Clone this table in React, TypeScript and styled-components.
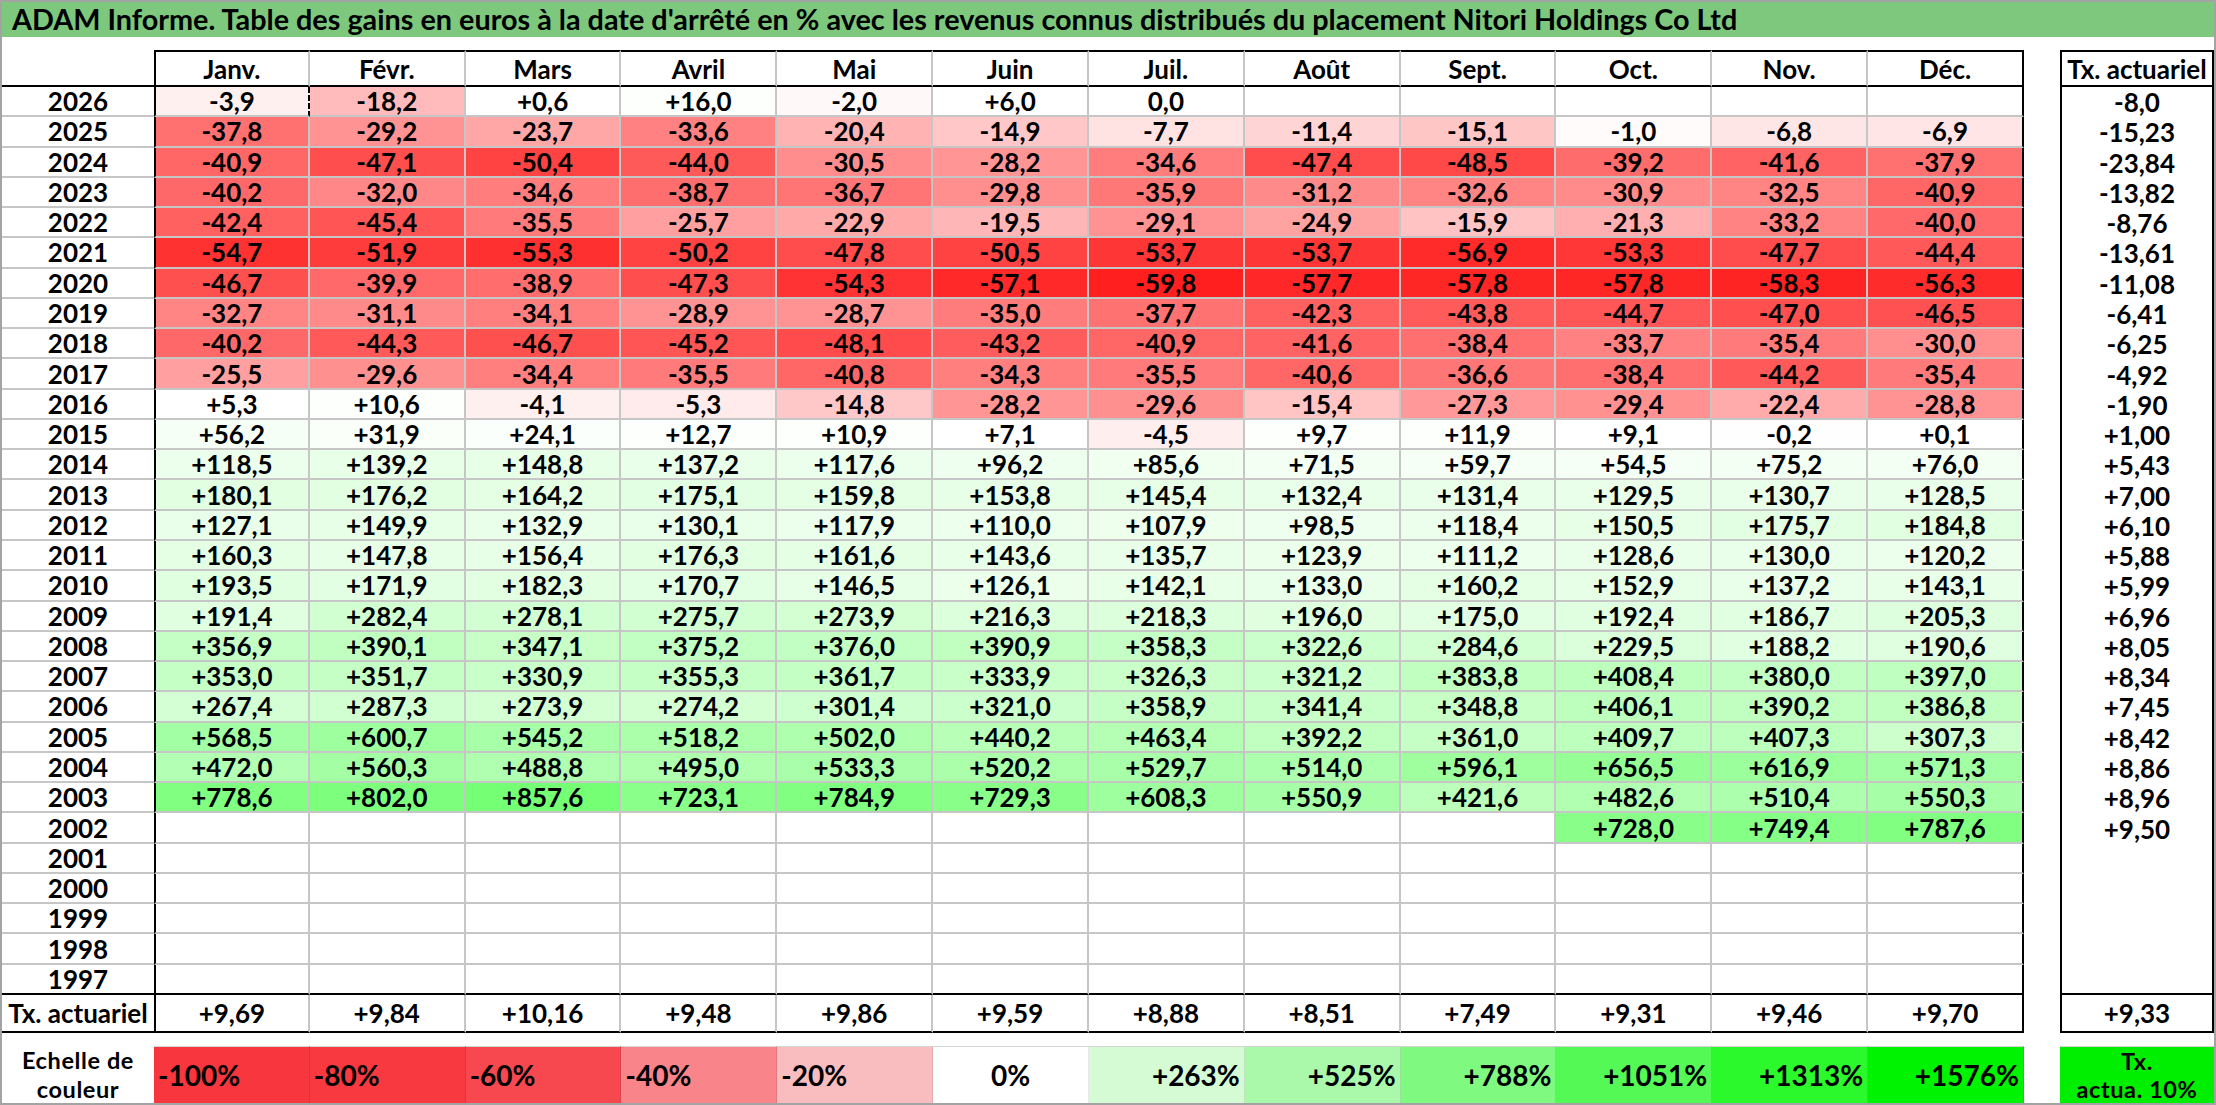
import React from "react";
import styled, { createGlobalStyle } from "styled-components";

const GlobalStyle = createGlobalStyle`
  html, body { margin: 0; padding: 0; background: #ffffff; }
  body { font-family: Lato, "Open Sans", "Liberation Sans", sans-serif; color: #000; }
  *, *::before, *::after { box-sizing: border-box; }
`;

const COLS = "152px repeat(12, 155.833px) 36px 1fr";
const GRID = "#c6c6c6";
const INK = "#000000";

type Edge = "none" | "grid" | "ink" | "dash";
const edge = (e: Edge) =>
  e === "none"
    ? "0 none"
    : e === "grid"
    ? `2px solid ${GRID}`
    : e === "dash"
    ? `2px dashed ${INK}`
    : `2px solid ${INK}`;

const Page = styled.div`
  width: 2216px;
  height: 1105px;
  border: 2px solid #a3a3a3;
  background: #ffffff;
  display: flex;
  flex-direction: column;
  overflow: hidden;
`;

const TitleBar = styled.div`
  flex: none;
  height: 35px;
  background: #7dc87d;
  display: flex;
  align-items: flex-end;
  padding: 0 0 2px 10px;
  font-size: 28.8px;
  line-height: 31px;
  font-weight: 700;
  white-space: nowrap;
`;

const Table = styled.div`
  margin-top: 13px;
  display: flex;
  flex-direction: column;
`;

const Row = styled.div<{ $h: number }>`
  flex: none;
  display: grid;
  grid-template-columns: ${COLS};
  height: ${(p) => p.$h}px;
`;

const LegendRow = styled(Row)`
  margin-top: 13px;
`;

const BaseCell = styled.div`
  display: flex;
  align-items: center;
  justify-content: center;
  font-size: 26px;
  line-height: 26px;
  font-weight: 700;
  white-space: nowrap;
  min-width: 0;
`;

const LabelCell = styled(BaseCell)<{ $bottom: Edge }>`
  border-bottom: ${(p) => edge(p.$bottom)};
`;

const MonthCell = styled(BaseCell)<{
  $bg: string;
  $top: Edge;
  $bottom: Edge;
  $left: Edge;
  $right: Edge;
}>`
  background: ${(p) => p.$bg};
  border-top: ${(p) => edge(p.$top)};
  border-bottom: ${(p) => edge(p.$bottom)};
  border-left: ${(p) => edge(p.$left)};
  border-right: ${(p) => edge(p.$right)};
`;

const Spacer = styled.div``;

const TxCell = styled(BaseCell)<{ $top: Edge; $bottom: Edge }>`
  border-left: ${edge("ink")};
  border-right: ${edge("ink")};
  border-top: ${(p) => edge(p.$top)};
  border-bottom: ${(p) => edge(p.$bottom)};
`;

const StackedText = styled.span`
  display: block;
  font-size: 23.5px;
  line-height: 28.5px;
  letter-spacing: 0.6px;
  text-align: center;
`;

const LegendLabel = styled(BaseCell)`
  flex-direction: column;
`;

const Swatch = styled(BaseCell)<{ $bg: string; $align: "left" | "center" | "right" }>`
  background: ${(p) => p.$bg};
  justify-content: ${(p) =>
    p.$align === "left" ? "flex-start" : p.$align === "right" ? "flex-end" : "center"};
  padding: 0 4px;
  font-size: 28px;
  line-height: 34px;
  border-top: 1px solid #d4d4d4;
  border-right: 1px solid rgba(0, 0, 0, 0.09);
`;

const LegendTx = styled(BaseCell)`
  background: #00ee00;
  flex-direction: column;
  border-top: 1px solid #d4d4d4;
`;

const MONTHS = [
  "Janv.", "Févr.", "Mars", "Avril", "Mai", "Juin",
  "Juil.", "Août", "Sept.", "Oct.", "Nov.", "Déc.",
];

const E = "";
const DATA: [string, string[], string][] = [
  ["2026", ["-3,9", "-18,2", "+0,6", "+16,0", "-2,0", "+6,0", "0,0", E, E, E, E, E], "-8,0"],
  ["2025", ["-37,8", "-29,2", "-23,7", "-33,6", "-20,4", "-14,9", "-7,7", "-11,4", "-15,1", "-1,0", "-6,8", "-6,9"], "-15,23"],
  ["2024", ["-40,9", "-47,1", "-50,4", "-44,0", "-30,5", "-28,2", "-34,6", "-47,4", "-48,5", "-39,2", "-41,6", "-37,9"], "-23,84"],
  ["2023", ["-40,2", "-32,0", "-34,6", "-38,7", "-36,7", "-29,8", "-35,9", "-31,2", "-32,6", "-30,9", "-32,5", "-40,9"], "-13,82"],
  ["2022", ["-42,4", "-45,4", "-35,5", "-25,7", "-22,9", "-19,5", "-29,1", "-24,9", "-15,9", "-21,3", "-33,2", "-40,0"], "-8,76"],
  ["2021", ["-54,7", "-51,9", "-55,3", "-50,2", "-47,8", "-50,5", "-53,7", "-53,7", "-56,9", "-53,3", "-47,7", "-44,4"], "-13,61"],
  ["2020", ["-46,7", "-39,9", "-38,9", "-47,3", "-54,3", "-57,1", "-59,8", "-57,7", "-57,8", "-57,8", "-58,3", "-56,3"], "-11,08"],
  ["2019", ["-32,7", "-31,1", "-34,1", "-28,9", "-28,7", "-35,0", "-37,7", "-42,3", "-43,8", "-44,7", "-47,0", "-46,5"], "-6,41"],
  ["2018", ["-40,2", "-44,3", "-46,7", "-45,2", "-48,1", "-43,2", "-40,9", "-41,6", "-38,4", "-33,7", "-35,4", "-30,0"], "-6,25"],
  ["2017", ["-25,5", "-29,6", "-34,4", "-35,5", "-40,8", "-34,3", "-35,5", "-40,6", "-36,6", "-38,4", "-44,2", "-35,4"], "-4,92"],
  ["2016", ["+5,3", "+10,6", "-4,1", "-5,3", "-14,8", "-28,2", "-29,6", "-15,4", "-27,3", "-29,4", "-22,4", "-28,8"], "-1,90"],
  ["2015", ["+56,2", "+31,9", "+24,1", "+12,7", "+10,9", "+7,1", "-4,5", "+9,7", "+11,9", "+9,1", "-0,2", "+0,1"], "+1,00"],
  ["2014", ["+118,5", "+139,2", "+148,8", "+137,2", "+117,6", "+96,2", "+85,6", "+71,5", "+59,7", "+54,5", "+75,2", "+76,0"], "+5,43"],
  ["2013", ["+180,1", "+176,2", "+164,2", "+175,1", "+159,8", "+153,8", "+145,4", "+132,4", "+131,4", "+129,5", "+130,7", "+128,5"], "+7,00"],
  ["2012", ["+127,1", "+149,9", "+132,9", "+130,1", "+117,9", "+110,0", "+107,9", "+98,5", "+118,4", "+150,5", "+175,7", "+184,8"], "+6,10"],
  ["2011", ["+160,3", "+147,8", "+156,4", "+176,3", "+161,6", "+143,6", "+135,7", "+123,9", "+111,2", "+128,6", "+130,0", "+120,2"], "+5,88"],
  ["2010", ["+193,5", "+171,9", "+182,3", "+170,7", "+146,5", "+126,1", "+142,1", "+133,0", "+160,2", "+152,9", "+137,2", "+143,1"], "+5,99"],
  ["2009", ["+191,4", "+282,4", "+278,1", "+275,7", "+273,9", "+216,3", "+218,3", "+196,0", "+175,0", "+192,4", "+186,7", "+205,3"], "+6,96"],
  ["2008", ["+356,9", "+390,1", "+347,1", "+375,2", "+376,0", "+390,9", "+358,3", "+322,6", "+284,6", "+229,5", "+188,2", "+190,6"], "+8,05"],
  ["2007", ["+353,0", "+351,7", "+330,9", "+355,3", "+361,7", "+333,9", "+326,3", "+321,2", "+383,8", "+408,4", "+380,0", "+397,0"], "+8,34"],
  ["2006", ["+267,4", "+287,3", "+273,9", "+274,2", "+301,4", "+321,0", "+358,9", "+341,4", "+348,8", "+406,1", "+390,2", "+386,8"], "+7,45"],
  ["2005", ["+568,5", "+600,7", "+545,2", "+518,2", "+502,0", "+440,2", "+463,4", "+392,2", "+361,0", "+409,7", "+407,3", "+307,3"], "+8,42"],
  ["2004", ["+472,0", "+560,3", "+488,8", "+495,0", "+533,3", "+520,2", "+529,7", "+514,0", "+596,1", "+656,5", "+616,9", "+571,3"], "+8,86"],
  ["2003", ["+778,6", "+802,0", "+857,6", "+723,1", "+784,9", "+729,3", "+608,3", "+550,9", "+421,6", "+482,6", "+510,4", "+550,3"], "+8,96"],
  ["2002", [E, E, E, E, E, E, E, E, E, "+728,0", "+749,4", "+787,6"], "+9,50"],
  ["2001", [E, E, E, E, E, E, E, E, E, E, E, E], E],
  ["2000", [E, E, E, E, E, E, E, E, E, E, E, E], E],
  ["1999", [E, E, E, E, E, E, E, E, E, E, E, E], E],
  ["1998", [E, E, E, E, E, E, E, E, E, E, E, E], E],
  ["1997", [E, E, E, E, E, E, E, E, E, E, E, E], E],
];

const TOTALS = ["+9,69", "+9,84", "+10,16", "+9,48", "+9,86", "+9,59", "+8,88", "+8,51", "+7,49", "+9,31", "+9,46", "+9,70"];
const TOTAL_TX = "+9,33";

const LEGEND: { label: string; bg: string; align: "left" | "center" | "right" }[] = [
  { label: "-100%", bg: "#f7363e", align: "left" },
  { label: "-80%", bg: "#f8393f", align: "left" },
  { label: "-60%", bg: "#f7474f", align: "left" },
  { label: "-40%", bg: "#f98489", align: "left" },
  { label: "-20%", bg: "#fabdbf", align: "left" },
  { label: "0%", bg: "#ffffff", align: "center" },
  { label: "+263%", bg: "#d5fbd5", align: "right" },
  { label: "+525%", bg: "#aaf9aa", align: "right" },
  { label: "+788%", bg: "#80f980", align: "right" },
  { label: "+1051%", bg: "#55f955", align: "right" },
  { label: "+1313%", bg: "#2bf92b", align: "right" },
  { label: "+1576%", bg: "#00f300", align: "right" },
];

function cellColor(s: string): string {
  if (!s) return "#ffffff";
  const v = parseFloat(s.replace(",", "."));
  if (!v) return "#ffffff";
  if (v < 0) {
    const t = Math.min(1, -v / 60);
    const g = Math.round(255 - t * 225);
    return `rgb(255, ${g}, ${g})`;
  }
  const t = Math.min(1, v / 1576);
  const c = Math.round(255 - t * 255);
  return `rgb(${c}, 255, ${c})`;
}

const HEADER_H = 37;
const ROW_H = 908 / 30;
const TOTAL_H = 38;
const LEGEND_H = 57;

export default function App() {
  const lastIdx = DATA.length - 1;
  return (
    <>
      <GlobalStyle />
      <Page>
        <TitleBar>
          ADAM Informe. Table des gains en euros à la date d'arrêté en % avec les revenus connus distribués du placement Nitori Holdings Co Ltd
        </TitleBar>
        <Table>
          <Row $h={HEADER_H}>
            <LabelCell $bottom="ink" />
            {MONTHS.map((m, i) => (
              <MonthCell
                key={m}
                $bg="#ffffff"
                $top="ink"
                $bottom="ink"
                $left={i === 0 ? "ink" : "none"}
                $right={i === 11 ? "ink" : "grid"}
              >
                {m}
              </MonthCell>
            ))}
            <Spacer />
            <TxCell $top="ink" $bottom="ink">Tx. actuariel</TxCell>
          </Row>
          {DATA.map(([year, vals, tx], r) => {
            const bottom: Edge = r === lastIdx ? "ink" : "grid";
            return (
              <Row key={year} $h={ROW_H}>
                <LabelCell $bottom={bottom}>{year}</LabelCell>
                {vals.map((v, i) => (
                  <MonthCell
                    key={i}
                    $bg={cellColor(v)}
                    $top="none"
                    $bottom={bottom}
                    $left={i === 0 ? "ink" : "none"}
                    $right={i === 11 ? "ink" : r === 0 && i === 0 ? "dash" : "grid"}
                  >
                    {v}
                  </MonthCell>
                ))}
                <Spacer />
                <TxCell $top="none" $bottom={r === lastIdx ? "ink" : "none"}>
                  {tx}
                </TxCell>
              </Row>
            );
          })}
          <Row $h={TOTAL_H}>
            <LabelCell $bottom="ink">Tx. actuariel</LabelCell>
            {TOTALS.map((v, i) => (
              <MonthCell
                key={i}
                $bg="#ffffff"
                $top="none"
                $bottom="ink"
                $left={i === 0 ? "ink" : "none"}
                $right={i === 11 ? "ink" : "grid"}
              >
                {v}
              </MonthCell>
            ))}
            <Spacer />
            <TxCell $top="none" $bottom="ink">{TOTAL_TX}</TxCell>
          </Row>
          <LegendRow $h={LEGEND_H}>
            <LegendLabel>
              <StackedText>Echelle de</StackedText>
              <StackedText>couleur</StackedText>
            </LegendLabel>
            {LEGEND.map((l) => (
              <Swatch key={l.label} $bg={l.bg} $align={l.align}>
                {l.label}
              </Swatch>
            ))}
            <Spacer />
            <LegendTx>
              <StackedText>Tx.</StackedText>
              <StackedText>actua. 10%</StackedText>
            </LegendTx>
          </LegendRow>
        </Table>
      </Page>
    </>
  );
}
